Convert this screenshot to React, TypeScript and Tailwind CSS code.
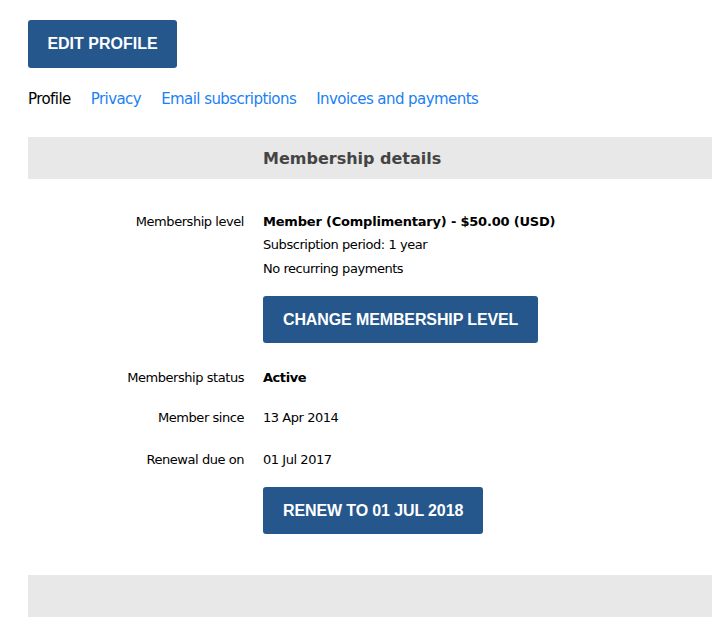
const rows = [
  { label: "Membership status", value: "Active", bold: true, extra: "" },
  { label: "Member since", value: "13 Apr 2014", extra: "" },
  { label: "Renewal due on", value: "01 Jul 2017", extra: "mt-[2px]" },
];

function Btn({ children }: { children: React.ReactNode }) {
  return (
    <button className="h-[47px] px-5 pt-px rounded-[3px] bg-[#25578c] text-white text-[16px] font-bold tracking-[-0.12px] font-['Liberation_Sans',Arial,sans-serif]">
      {children}
    </button>
  );
}

export default function App() {
  return (
    <div className="min-h-[629px] bg-white pl-7 pt-5 font-['DejaVu_Sans',Verdana,sans-serif] text-black overflow-hidden">
      <button className="h-12 w-[149px] rounded-[3px] bg-[#25578c] text-white text-[16px] font-bold font-['Liberation_Sans',Arial,sans-serif]">
        EDIT PROFILE
      </button>

      {/* Tabs */}
      <nav className="flex gap-5 mt-5 text-[15px] tracking-[-0.56px]">
        <span>Profile</span>
        <a className="text-[#1b7ff5]">Privacy</a>
        <a className="text-[#1b7ff5]">Email subscriptions</a>
        <a className="text-[#1b7ff5]">Invoices and payments</a>
      </nav>

      <div className="mt-[26px] h-[42px] bg-[#e8e8e8] flex items-center pl-[235px] pt-[2px]">
        <h2 className="text-[16px] font-bold text-[#444]">Membership details</h2>
      </div>

      <div className="grid grid-cols-[216px_1fr] gap-x-[19px] mt-[31px] text-[13px] tracking-[-0.45px]">
        <div className="text-right leading-6">Membership level</div>
        <div>
          <div className="font-bold leading-6 tracking-[-0.2px]">Member (Complimentary) - $50.00 (USD)</div>
          <div className="leading-6 -mt-px">Subscription period: 1 year</div>
          <div className="leading-6">No recurring payments</div>
          <div className="mt-[15px]">
            <Btn>CHANGE MEMBERSHIP LEVEL</Btn>
          </div>
        </div>
      </div>

      <div className="grid grid-cols-[216px_1fr] gap-x-[19px] gap-y-4 mt-[23px] text-[13px] tracking-[-0.45px]">
        {rows.map((r) => (
          <div key={r.label} className="contents">
            <div className={`text-right leading-6 ${r.extra}`}>{r.label}</div>
            <div className={`${r.bold ? "font-bold" : ""} leading-6 ${r.extra}`}>{r.value}</div>
          </div>
        ))}
        <div />
        <div className="mt-[-1px]">
          <Btn>RENEW TO 01 JUL 2018</Btn>
        </div>
      </div>

      <div className="mt-[41px] h-[42px] bg-[#e8e8e8]" />
    </div>
  );
}
